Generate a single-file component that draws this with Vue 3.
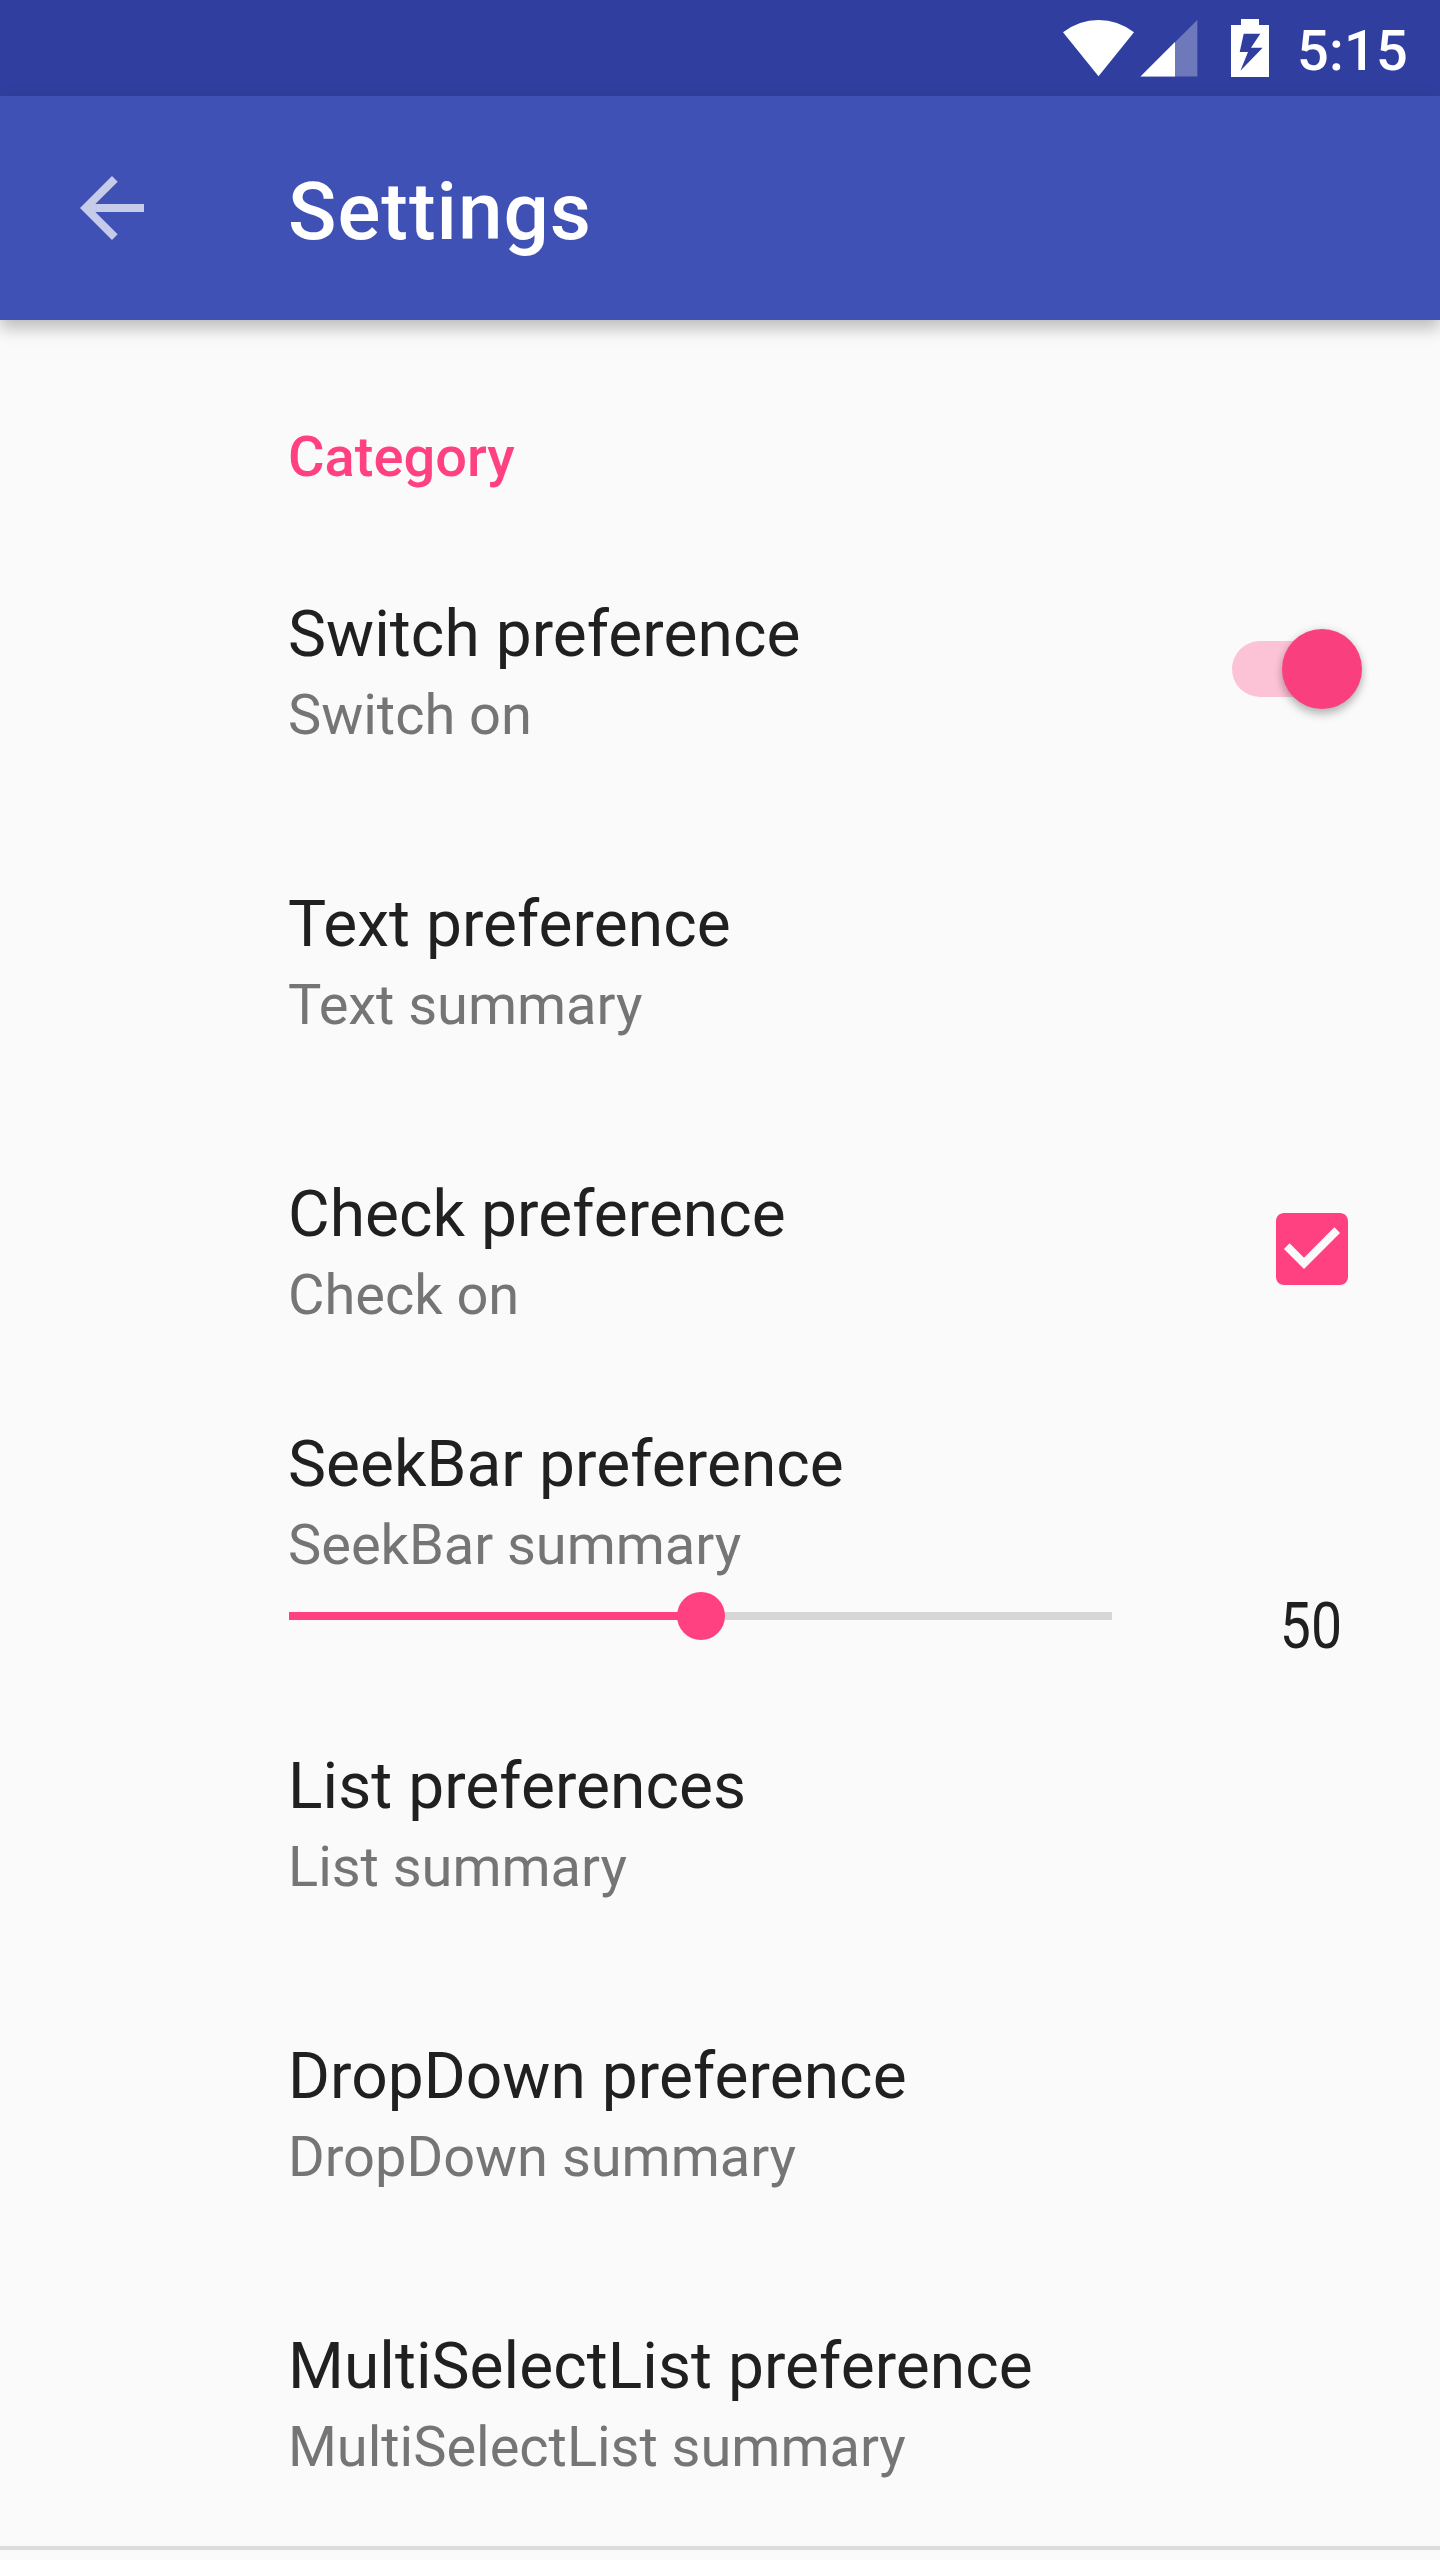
<script setup>
const before = [
  { title: 'Switch preference', summary: 'Switch on', control: 'switch' },
  { title: 'Text preference', summary: 'Text summary' },
  { title: 'Check preference', summary: 'Check on', control: 'check' },
]
const after = [
  { title: 'List preferences', summary: 'List summary' },
  { title: 'DropDown preference', summary: 'DropDown summary' },
  { title: 'MultiSelectList preference', summary: 'MultiSelectList summary' },
]
const seek = 50
</script>

<template>
  <div class="screen">
    <div class="status">
      <svg class="signals" width="216" height="96" viewBox="1060 0 216 96">
        <path fill="#fff" d="M1063 32.3Q1079 20 1098.5 20T1134 32.3L1098.5 76.3z" />
        <path fill="#fff" fill-opacity=".3" d="M1140.5 76.5L1197.3 20V76.5z" />
        <path fill="#fff" d="M1140.5 76.5L1175 42.1V76.5z" />
        <path
          fill="#fff"
          fill-rule="evenodd"
          d="M1241 19h18v6h10v52h-38V25h10zM1243.7 33.7L1239.7 52H1248L1240.4 70.7L1262.7 47.7H1251L1260.3 33.7z"
        />
      </svg>
      <span class="clock">5:15</span>
    </div>
    <header class="bar">
      <svg class="back" width="96" height="96" viewBox="0 0 24 24">
        <path fill="#fff" fill-opacity=".7" d="M20 11H7.83l5.59-5.59L12 4l-8 8 8 8 1.41-1.41L7.83 13H20v-2z" />
      </svg>
      <h1>Settings</h1>
    </header>
    <main>
      <h2>Category</h2>
      <div v-for="p in before" :key="p.title" class="row">
        <div class="text">
          <div class="title">{{ p.title }}</div>
          <div class="summary">{{ p.summary }}</div>
        </div>
        <div v-if="p.control === 'switch'" class="switch"><div class="knob"></div></div>
        <svg v-if="p.control === 'check'" class="check" width="96" height="96" viewBox="0 0 24 24">
          <path fill="#ff4081" d="M19 3H5c-1.11 0-2 .9-2 2v14c0 1.1.89 2 2 2h14c1.11 0 2-.9 2-2V5c0-1.1-.89-2-2-2zm-9 14l-5-5 1.41-1.41L10 14.17l7.59-7.59L19 8l-9 9z" />
        </svg>
      </div>
      <div class="row seek">
        <div class="text">
          <div class="title">SeekBar preference</div>
          <div class="summary">SeekBar summary</div>
          <div class="track">
            <div class="fill" :style="{ width: seek + '%' }"></div>
            <div class="thumb"></div>
          </div>
        </div>
        <div class="value"><span>{{ seek }}</span></div>
      </div>
      <div v-for="p in after" :key="p.title" class="row">
        <div class="text">
          <div class="title">{{ p.title }}</div>
          <div class="summary">{{ p.summary }}</div>
        </div>
      </div>
      <div class="divider"></div>
    </main>
  </div>
</template>

<style>
html, body { background: #fafafa; }
</style>

<style scoped>
.screen {
  width: 1440px;
  height: 2560px;
  overflow: hidden;
  background: #fafafa;
  font-family: Roboto, "Liberation Sans", sans-serif;
  color: #202020;
}
.screen * { box-sizing: border-box; }
.status {
  height: 96px;
  padding-left: 1060px;
  display: flex;
  background: #303f9f;
}
.signals { flex: none; }
.clock {
  margin-left: 21px;
  color: #fff;
  font-size: 56px;
  font-weight: 500;
  line-height: 66px;
  letter-spacing: .2px;
  padding-top: 18px;
}
.bar {
  height: 224px;
  padding-left: 64px;
  display: flex;
  align-items: center;
  background: #3f51b5;
  box-shadow: 0 8px 16px rgba(0, 0, 0, .26);
}
h1 {
  margin: 7px 0 0 128px;
  color: #fff;
  font-size: 80px;
  font-weight: 500;
  line-height: 94px;
  letter-spacing: 1px;
}
h2 {
  margin: 0;
  height: 204px;
  padding: 104px 0 0 288px;
  font-size: 56px;
  font-weight: 500;
  line-height: 66px;
  color: #ff4081;
}
.row {
  height: 290px;
  padding-left: 288px;
  display: flex;
  align-items: center;
}
.text {
  align-self: flex-start;
  width: 824px;
  padding-top: 69px;
  white-space: nowrap;
}
.title { font-size: 64px; line-height: 84px; letter-spacing: .06px; }
.summary { font-size: 56px; line-height: 76px; letter-spacing: -.03px; color: #757575; }
.switch {
  width: 112px;
  height: 56px;
  margin-left: 120px;
  padding-left: 50px;
  display: flex;
  align-items: center;
  border-radius: 28px;
  background: #fcc3d6;
}
.knob {
  flex: none;
  width: 80px;
  height: 80px;
  border-radius: 50%;
  background: #fa3f7e;
  box-shadow: 0 6px 8px rgba(0, 0, 0, .22), 0 0 8px rgba(0, 0, 0, .12);
}
.check { margin-left: 152px; }
.seek { height: 282px; }
.seek .text { padding-top: 29px; }
.track {
  height: 8px;
  margin: 29px 0 0 1px;
  display: flex;
  align-items: center;
  background: #d6d6d6;
}
.fill { height: 8px; background: #ff4081; }
.thumb {
  flex: none;
  width: 48px;
  height: 48px;
  margin-left: -24px;
  border-radius: 50%;
  background: #ff4081;
}
.value {
  align-self: flex-start;
  width: 200px;
  margin-left: 99px;
  padding-top: 195px;
  font-size: 64px;
  line-height: 75px;
  text-align: center;
}
.value span { display: inline-block; transform: scaleX(.865); }
.divider { height: 4px; background: #dcdcdc; }
</style>
